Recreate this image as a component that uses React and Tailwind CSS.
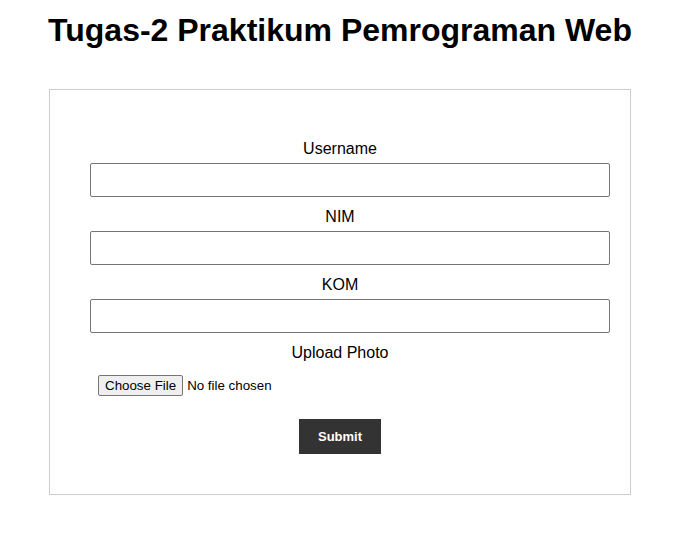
export default function App() {
  return (
    <div className="min-h-[537px] bg-white text-black font-['Liberation_Sans',Arial,sans-serif]">
      <div className="w-[680px]">
        <h1 className="pt-[12px] text-center text-[32px] leading-[37px] font-bold">
          Tugas-2 Praktikum Pemrograman Web
        </h1>

        <form
          className="mt-[40px] ml-[49px] w-[582px] border border-[#cccccc] pl-[40px] pt-[49px] pb-[40px] text-center"
          onSubmit={(e) => e.preventDefault()}
        >
          {['Username', 'NIM', 'KOM'].map((label) => (
            <div key={label} className="w-[500px]">
              <label className="block text-[16px] leading-[19px] mb-[5px]">{label}</label>
              <input
                type="text"
                className="block w-[520px] h-[34px] mb-[10px] px-2 border border-[#767676] rounded-[2px] text-[14px]"
              />
            </div>
          ))}

          <div className="w-[500px]">
            <label className="block text-[16px] leading-[19px] mb-[5px]">Upload Photo</label>
            <input
              type="file"
              className="block w-full p-2 mb-[15px] text-left text-[13.33px] font-['Liberation_Sans',Arial,sans-serif] file:mr-[4px] file:px-[6px] file:h-[21px] file:bg-[#efefef] file:border file:border-[#767676] file:rounded-[2px] file:text-black"
            />

            <button
              type="submit"
              className="h-[35px] w-[82px] bg-[#333333] text-white text-[13px] font-bold"
            >
              Submit
            </button>
          </div>
        </form>
      </div>
    </div>
  )
}
